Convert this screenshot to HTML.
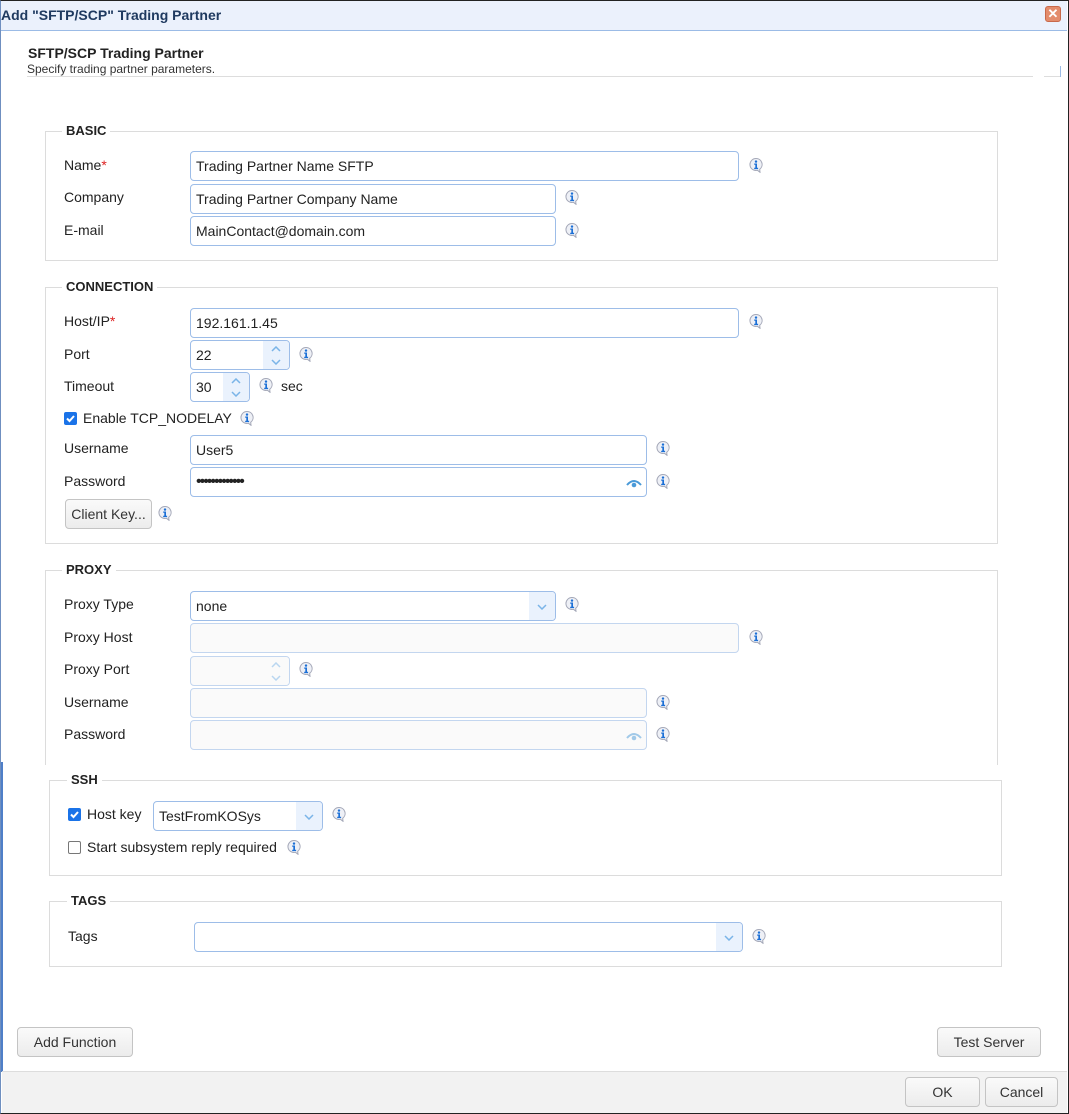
<!DOCTYPE html>
<html><head><meta charset="utf-8"><style>
*{box-sizing:border-box;margin:0;padding:0}
body{width:1069px;height:1114px;position:relative;background:#fff;font-family:"Liberation Sans",Arial,sans-serif;font-size:14px;color:#222;overflow:hidden}
.a{position:absolute}
.frame{left:0;top:0;width:1069px;height:1114px;border:1px solid #222;border-left:1px solid #6f8fc0}
.title{left:1px;top:1px;width:1066px;height:30px;background:#ebf1fc;border-bottom:1px solid #9bbbe6;font-weight:bold;font-size:14px;color:#1f3a60;line-height:28px}
.fs{border:1px solid #dcdcdc}
.lg{background:#fff;font-weight:bold;font-size:13px;padding:0 4px;line-height:16px;color:#222}
.lb{font-size:14px;line-height:16px}
.in{border:1px solid #9dbde8;border-radius:4px;height:30px;background:#fff;font-size:14px;line-height:28px;padding-left:5px}
.dis{background:#fafafa;border-color:#c3d6ef}
.sp{position:absolute;right:0;top:0;bottom:0;width:26px;background:#eaf2fd;border-radius:0 3px 3px 0}
.btn{border:1px solid #c4c4c4;border-radius:4px;background:linear-gradient(#fafafa,#ececec);font-size:14px;text-align:center;line-height:27px;color:#333}
.cb{width:13px;height:13px;border-radius:2px}
.on{background:#1a73e8}
.off{border:1px solid #777;background:#fff}
</style></head><body>
<svg width="0" height="0" style="position:absolute"><defs>
<symbol id="i" viewBox="0 0 16 16"><path d="M8 1.5a6 6 0 1 0 1.5 11.8l2.5 2 -.3-3A6 6 0 0 0 8 1.5z" fill="#eef0f6" stroke="#a4a8b8" stroke-width="1"/><circle cx="8" cy="4.6" r="1.2" fill="#1b6fd6"/><path d="M6.2 6.5h2.8v4.3h1.1v1.3H6.2v-1.3h1.1V7.8h-1.1z" fill="#1b6fd6"/></symbol>
<symbol id="dn" viewBox="0 0 10 6"><path d="M1 1l4 4 4-4" fill="none" stroke="#7ab4e8" stroke-width="1.5"/></symbol>
<symbol id="up" viewBox="0 0 10 6"><path d="M1 5l4-4 4 4" fill="none" stroke="#7ab4e8" stroke-width="1.5"/></symbol>
<symbol id="eye" viewBox="0 0 16 10"><path d="M1 7Q8-1 15 7" fill="none" stroke="#4a9ad8" stroke-width="2"/><circle cx="8" cy="7" r="2.3" fill="#4a9ad8"/></symbol>
</defs></svg>
<div class="a frame"></div>
<div class="a title">Add "SFTP/SCP" Trading Partner</div>
<div class="a" style="left:1045px;top:6px;width:16px;height:16px;background:#e38c6c;border:1px solid #c8694a;border-radius:3px;color:#fff;font-weight:bold;font-size:13px;line-height:13px;text-align:center">✕</div>

<div class="a" style="left:28px;top:45px;font-weight:bold;font-size:14px">SFTP/SCP Trading Partner</div>
<div class="a" style="left:27px;top:62px;font-size:12px;color:#333">Specify trading partner parameters.</div>
<div class="a" style="left:27px;top:76px;width:1006px;height:1px;background:#ddd"></div>
<div class="a" style="left:1044px;top:76px;width:16px;height:1px;background:#ddd"></div>
<div class="a" style="left:1060px;top:66px;width:1px;height:11px;background:#9bbbe6"></div>

<!-- BASIC -->
<div class="a fs" style="left:45px;top:131px;width:953px;height:130px"></div>
<div class="a lg" style="left:62px;top:123px">BASIC</div>
<div class="a lb" style="left:64px;top:157px">Name<span style="color:#d22">*</span></div>
<div class="a in" style="left:190px;top:151px;width:549px">Trading Partner Name SFTP</div>
<svg class="a" style="left:748px;top:157px" width="16" height="16"><use href="#i"/></svg>
<div class="a lb" style="left:64px;top:189px">Company</div>
<div class="a in" style="left:190px;top:184px;width:366px">Trading Partner Company Name</div>
<svg class="a" style="left:564px;top:189px" width="16" height="16"><use href="#i"/></svg>
<div class="a lb" style="left:64px;top:222px">E-mail</div>
<div class="a in" style="left:190px;top:216px;width:366px">MainContact@domain.com</div>
<svg class="a" style="left:564px;top:222px" width="16" height="16"><use href="#i"/></svg>

<!-- CONNECTION -->
<div class="a fs" style="left:45px;top:287px;width:953px;height:257px"></div>
<div class="a lg" style="left:62px;top:279px">CONNECTION</div>
<div class="a lb" style="left:64px;top:313px">Host/IP<span style="color:#d22">*</span></div>
<div class="a in" style="left:190px;top:308px;width:549px">192.161.1.45</div>
<svg class="a" style="left:748px;top:313px" width="16" height="16"><use href="#i"/></svg>
<div class="a lb" style="left:64px;top:346px">Port</div>
<div class="a in" style="left:190px;top:340px;width:100px">22<div class="sp"><svg class="a" style="left:8px;top:5px" width="10" height="6"><use href="#up"/></svg><svg class="a" style="left:8px;top:18px" width="10" height="6"><use href="#dn"/></svg></div></div>
<svg class="a" style="left:298px;top:346px" width="16" height="16"><use href="#i"/></svg>
<div class="a lb" style="left:64px;top:378px">Timeout</div>
<div class="a in" style="left:190px;top:372px;width:60px">30<div class="sp"><svg class="a" style="left:8px;top:5px" width="10" height="6"><use href="#up"/></svg><svg class="a" style="left:8px;top:18px" width="10" height="6"><use href="#dn"/></svg></div></div>
<svg class="a" style="left:258px;top:377px" width="16" height="16"><use href="#i"/></svg>
<div class="a lb" style="left:281px;top:378px">sec</div>
<div class="a cb on" style="left:64px;top:412px"><svg width="13" height="13"><path d="M3 6.5l2.5 2.5 4.5-5" fill="none" stroke="#fff" stroke-width="2"/></svg></div>
<div class="a lb" style="left:83px;top:410px">Enable TCP_NODELAY</div>
<svg class="a" style="left:239px;top:410px" width="16" height="16"><use href="#i"/></svg>
<div class="a lb" style="left:64px;top:440px">Username</div>
<div class="a in" style="left:190px;top:435px;width:457px">User5</div>
<svg class="a" style="left:655px;top:440px" width="16" height="16"><use href="#i"/></svg>
<div class="a lb" style="left:64px;top:473px">Password</div>
<div class="a in" style="left:190px;top:467px;width:457px;font-size:16px;letter-spacing:-2px">•••••••••••••<svg class="a" style="left:435px;top:10px" width="16" height="10"><use href="#eye"/></svg></div>
<svg class="a" style="left:655px;top:473px" width="16" height="16"><use href="#i"/></svg>
<div class="a btn" style="left:65px;top:499px;width:87px;height:30px;line-height:28px">Client Key...</div>
<svg class="a" style="left:157px;top:505px" width="16" height="16"><use href="#i"/></svg>

<!-- PROXY -->
<div class="a fs" style="left:45px;top:570px;width:953px;height:195px;border-bottom:none"></div>
<div class="a lg" style="left:62px;top:562px">PROXY</div>
<div class="a lb" style="left:64px;top:596px">Proxy Type</div>
<div class="a in" style="left:190px;top:591px;width:366px">none<div class="sp"><svg class="a" style="left:8px;top:12px" width="10" height="6"><use href="#dn"/></svg></div></div>
<svg class="a" style="left:564px;top:596px" width="16" height="16"><use href="#i"/></svg>
<div class="a lb" style="left:64px;top:629px">Proxy Host</div>
<div class="a in dis" style="left:190px;top:623px;width:549px"></div>
<svg class="a" style="left:748px;top:629px" width="16" height="16"><use href="#i"/></svg>
<div class="a lb" style="left:64px;top:661px">Proxy Port</div>
<div class="a in dis" style="left:190px;top:656px;width:100px"><div class="sp" style="background:#fafafa"><svg class="a" style="left:8px;top:5px;opacity:.5" width="10" height="6"><use href="#up"/></svg><svg class="a" style="left:8px;top:18px;opacity:.5" width="10" height="6"><use href="#dn"/></svg></div></div>
<svg class="a" style="left:298px;top:661px" width="16" height="16"><use href="#i"/></svg>
<div class="a lb" style="left:64px;top:694px">Username</div>
<div class="a in dis" style="left:190px;top:688px;width:457px"></div>
<svg class="a" style="left:655px;top:694px" width="16" height="16"><use href="#i"/></svg>
<div class="a lb" style="left:64px;top:726px">Password</div>
<div class="a in dis" style="left:190px;top:720px;width:457px"><svg class="a" style="left:435px;top:10px;opacity:.5" width="16" height="10"><use href="#eye"/></svg></div>
<svg class="a" style="left:655px;top:726px" width="16" height="16"><use href="#i"/></svg>
<div class="a" style="left:1px;top:762px;width:2px;height:310px;background:#4f7fc8"></div>

<!-- SSH -->
<div class="a fs" style="left:49px;top:780px;width:953px;height:96px"></div>
<div class="a lg" style="left:67px;top:772px">SSH</div>
<div class="a cb on" style="left:68px;top:808px"><svg width="13" height="13"><path d="M3 6.5l2.5 2.5 4.5-5" fill="none" stroke="#fff" stroke-width="2"/></svg></div>
<div class="a lb" style="left:87px;top:806px">Host key</div>
<div class="a in" style="left:153px;top:801px;width:170px">TestFromKOSys<div class="sp"><svg class="a" style="left:8px;top:12px" width="10" height="6"><use href="#dn"/></svg></div></div>
<svg class="a" style="left:331px;top:806px" width="16" height="16"><use href="#i"/></svg>
<div class="a cb off" style="left:68px;top:841px"></div>
<div class="a lb" style="left:87px;top:839px">Start subsystem reply required</div>
<svg class="a" style="left:286px;top:839px" width="16" height="16"><use href="#i"/></svg>

<!-- TAGS -->
<div class="a fs" style="left:49px;top:901px;width:953px;height:66px"></div>
<div class="a lg" style="left:67px;top:893px">TAGS</div>
<div class="a lb" style="left:68px;top:928px">Tags</div>
<div class="a in" style="left:194px;top:922px;width:549px"><div class="sp"><svg class="a" style="left:8px;top:12px" width="10" height="6"><use href="#dn"/></svg></div></div>
<svg class="a" style="left:751px;top:928px" width="16" height="16"><use href="#i"/></svg>

<div class="a btn" style="left:17px;top:1027px;width:116px;height:30px;line-height:28px">Add Function</div>
<div class="a btn" style="left:937px;top:1027px;width:104px;height:30px;line-height:28px">Test Server</div>

<div class="a" style="left:2px;top:1071px;width:1065px;height:42px;background:#f2f2f2;border-top:1px solid #ddd"></div>
<div class="a btn" style="left:905px;top:1077px;width:75px;height:30px;line-height:28px">OK</div>
<div class="a btn" style="left:985px;top:1077px;width:73px;height:30px;line-height:28px">Cancel</div>
</body></html>
